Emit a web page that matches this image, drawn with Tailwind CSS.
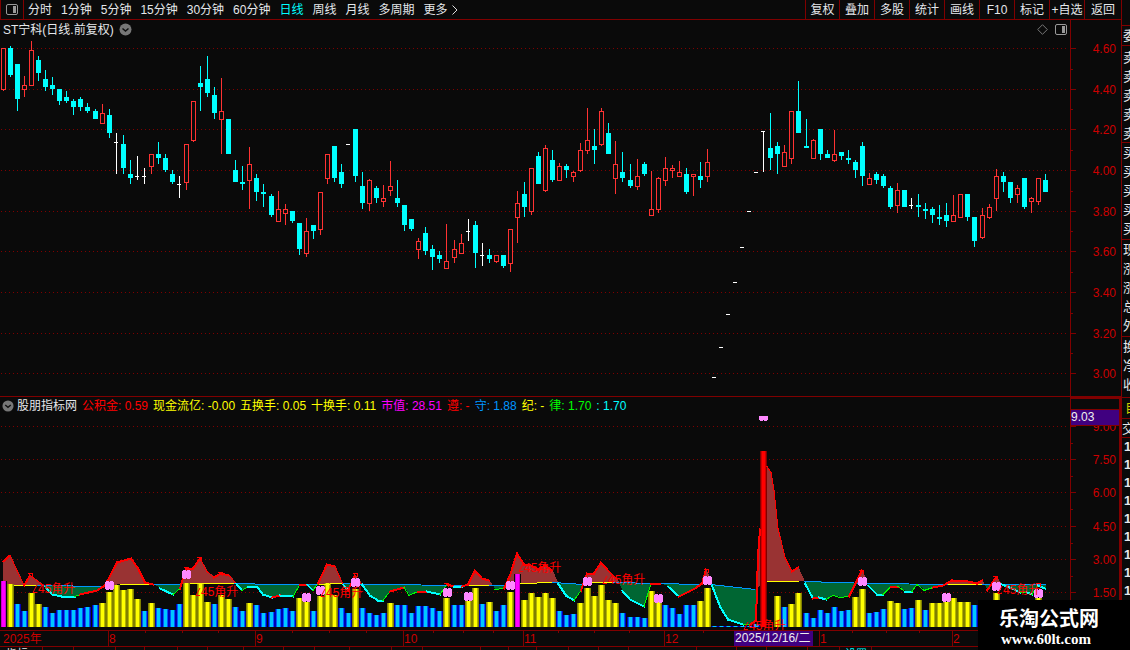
<!DOCTYPE html>
<html lang="zh-CN">
<head>
    <meta charset="UTF-8">
    <meta name="viewport" content="width=device-width, initial-scale=1.0">
    <title>ST宁科 日线</title>
    <script src="https://cdn.jsdelivr.net/npm/@tailwindcss/browser@4"></script>
</head>
<body class="h-screen overflow-hidden bg-[#0a0a0a] text-[12px] leading-[18px] text-gray-200 font-['Liberation_Sans','Noto_Sans_CJK_SC',sans-serif] whitespace-nowrap">
<div class="flex h-full">

    <main class="flex-1 min-w-0 flex flex-col">
        <!-- Toolbar -->
        <nav class="h-5 shrink-0 flex justify-between border-b border-l border-[#800000]">
            <div class="flex">
                <button type="button" aria-label="侧栏" class="w-[23px] flex items-center justify-center border-r border-[#800000]">
                    <svg width="12" height="11" viewBox="0 0 12 11" fill="none"><rect x=".5" y=".5" width="11" height="10" rx="1.5" stroke="#999"/><rect x="7" y="2" width="3" height="7" fill="#999"/></svg>
                </button>
                <div class="flex gap-[9px] pl-1">
                    <button type="button">分时</button>
                    <button type="button">1分钟</button>
                    <button type="button">5分钟</button>
                    <button type="button">15分钟</button>
                    <button type="button">30分钟</button>
                    <button type="button">60分钟</button>
                    <button type="button" class="text-[#00ffff]">日线</button>
                    <button type="button">周线</button>
                    <button type="button">月线</button>
                    <button type="button">多周期</button>
                    <button type="button" class="flex items-center gap-1">更多
                        <svg width="6" height="10" viewBox="0 0 6 10" fill="none" stroke="#ddd"><path d="M.5 .5L5 5L.5 9.5"/></svg>
                    </button>
                </div>
            </div>
            <div class="flex">
                <button type="button" class="w-[34px] border-l border-[#800000]">复权</button>
                <button type="button" class="w-[35px] border-l border-[#800000]">叠加</button>
                <button type="button" class="w-[35px] border-l border-[#800000]">多股</button>
                <button type="button" class="w-[35px] border-l border-[#800000]">统计</button>
                <button type="button" class="w-[35px] border-l border-[#800000]">画线</button>
                <button type="button" class="w-[35px] border-l border-[#800000]">F10</button>
                <button type="button" class="w-[35px] border-l border-[#800000]">标记</button>
                <button type="button" class="w-[35px] border-l border-[#800000]">+自选</button>
                <button type="button" class="w-[37px] border-l border-[#800000]">返回</button>
            </div>
        </nav>

        <!-- Candlesticks -->
        <section class="shrink-0 flex">
            <div class="flex-1 min-w-0">
                <div class="h-[19px] flex items-center justify-between pl-[3px] pr-[3px]">
                    <h1 class="flex items-center gap-[5px]">ST宁科(日线.前复权)
                        <svg width="13" height="13" viewBox="0 0 13 13" fill="none"><circle cx="6.5" cy="6.5" r="6" fill="#777"/><path d="M3.5 5.5L6.5 8L9.5 5.5" stroke="#111" stroke-width="1.5"/></svg>
                    </h1>
                    <div class="flex items-center gap-[7px]">
                        <svg width="11" height="11" viewBox="0 0 11 11" fill="none" stroke="#777"><path d="M5.5 .7L10.3 5.5L5.5 10.3L.7 5.5Z"/></svg>
                        <svg width="12" height="11" viewBox="0 0 12 11" fill="none"><rect x=".5" y=".5" width="11" height="10" rx="1.5" stroke="#999"/><rect x="7" y="2" width="3" height="7" fill="#999"/></svg>
                    </div>
                </div>
                <svg class="block w-full h-[357px]" shape-rendering="crispEdges"><g id="candles" transform="translate(0,-39)"></g></svg>
            </div>
            <svg class="block w-[51px] h-[376px] border-l border-[#800000]"><g id="priceAxis" transform="translate(0,-20)"></g></svg>
        </section>

        <!-- Indicator -->
        <section class="shrink-0 flex border-t border-[#800000]">
            <div class="flex-1 min-w-0">
                <div class="h-[18px] flex items-center gap-[5px] pl-[2px]">
                    <svg width="12" height="12" viewBox="0 0 13 13" fill="none"><circle cx="6.5" cy="6.5" r="6" fill="#777"/><path d="M3.5 5.5L6.5 8L9.5 5.5" stroke="#111" stroke-width="1.5"/></svg>
                    <span class="-ml-[2px]">股朋指标网</span>
                    <span class="text-[#ff0000]">公积金: 0.59</span>
                    <span class="text-[#ffff00]">现金流亿: -0.00</span>
                    <span class="text-[#ffff00]">五换手: 0.05</span>
                    <span class="text-[#ffff00]">十换手: 0.11</span>
                    <span class="text-[#ff00ff]">市值: 28.51</span>
                    <span class="text-[#ff0000]">遵: -</span>
                    <span class="text-[#0096ff]">守: 1.88</span>
                    <span class="text-[#ffff00]">纪: -</span>
                    <span class="text-[#00ff00]">律: 1.70</span>
                    <span class="text-[#00ffff]">: 1.70</span>
                </div>
                <svg class="block w-full h-[215px] overflow-visible"><g id="indicator" transform="translate(0,-415)"></g></svg>
            </div>
            <svg class="block w-[51px] h-[233px] border-l border-t-2 border-r-2 border-[#800000]"><g id="valueAxis" transform="translate(0,-399)"></g></svg>
        </section>

        <!-- Dates -->
        <svg class="block shrink-0 w-full h-4 border-t border-[#800000]"><g id="dates"></g></svg>

        <!-- Lower tabs, only their top edge is in view -->
        <div class="h-1 shrink-0 overflow-hidden flex border-t border-[#800000] text-[11px] leading-[14px]">
            <span class="w-[43px] pl-[6px] border-r border-[#800000]">指标</span>
            <span class="w-[31px] border-r border-[#800000]"></span>
            <span class="w-[42px] border-r border-[#800000]"></span>
            <span class="w-[29px] border-r border-[#800000]"></span>
            <span class="w-[33px] border-r border-[#800000]"></span>
            <span class="w-[30px] border-r border-[#800000]"></span>
            <span class="w-[36px] border-r border-[#800000]"></span>
            <span class="w-[40px] border-r border-[#800000]"></span>
            <span class="w-[31px] border-r border-[#800000]"></span>
            <span class="w-[35px] border-r border-[#800000]"></span>
            <span class="w-[42px] border-r border-[#800000]"></span>
            <span class="w-[31px] border-r border-[#800000]"></span>
            <span class="w-[58px] border-r border-[#800000]"></span>
            <span class="w-[28px] border-r border-[#800000]"></span>
            <span class="w-[28px] border-r border-[#800000]"></span>
            <span class="w-[32px] border-r border-[#800000]"></span>
            <span class="w-[30px] border-r border-[#800000]"></span>
            <span class="w-[30px] border-r border-[#800000]"></span>
            <span class="w-[68px] border-r border-[#800000]"></span>
            <span class="w-[40px] border-r border-[#800000]"></span>
            <span class="w-[30px] border-r border-[#800000]"></span>
            <span class="w-[41px] border-r border-[#800000]"></span>
            <span class="w-[32px] border-r border-[#800000]"></span>
            <span class="w-[32px] pl-[5px] border-r border-[#800000] text-[#00ffff]">设置</span>
        </div>
    </main>

    <!-- Quote panel, pushed off the right edge of the window -->
    <aside class="w-[9px] shrink-0 overflow-hidden border-l border-[#800000] pt-[25px] text-[13px] leading-[19px]">
        <p class="pl-[1px] border-y border-[#800000]">委比</p>
        <div class="pl-[1px] pt-[2px] h-[97px] border-b border-[#800000]"><p>卖五</p><p>卖四</p><p>卖三</p><p>卖二</p><p>卖一</p></div>
        <div class="pl-[1px] h-[97px] border-b border-[#800000]"><p>买一</p><p>买二</p><p>买三</p><p>买四</p><p>买五</p></div>
        <div class="pl-[1px] h-[97px] border-b border-[#800000]"><p>现价</p><p>涨跌</p><p>涨幅</p><p>总量</p><p>外盘</p></div>
        <div class="pl-[1px] h-[61px] border-b border-[#800000]"><p>换手</p><p>净资</p><p>收益</p></div>
        <p class="pl-[3px] h-[21px] border-b border-[#800000] text-[#cccc00]">自选</p>
        <p class="h-[19px] border-b border-[#800000]">交易</p>
        <div class="pl-[2px] font-bold leading-[18px]"><p>1</p><p>1</p><p>1</p><p>1</p><p>1</p><p>1</p><p>1</p><p>1</p><p>1</p></div>
    </aside>
</div>

<!-- Site badge -->
<div class="absolute right-0 bottom-0 w-[152px] h-[50px] bg-black text-white font-bold pl-[21px] pt-[8px]">
    <p class="text-[20px] leading-[22px]">乐淘公式网</p>
    <p class="pl-[2px] text-[15px] leading-[18px] font-['Liberation_Serif',serif]">www.60lt.com</p>
</div>

<script>
    const NS = 'http://www.w3.org/2000/svg';

    function add(parent, tag, attrs, text) {
        const el = document.createElementNS(NS, tag);
        for (const k in attrs) el.setAttribute(k, attrs[k]);
        if (text) el.textContent = text;
        parent.appendChild(el);
        return el;
    }

    function box(parent, x, y, w, h, fill) {
        add(parent, 'rect', { x, y, width: w, height: h, fill });
    }

    // Pixel column of bar i
    function col(i) {
        return 3 + 7 * i + Math.floor((i + 12.3) / 25.1);
    }

    // r: up, c: down, w: unchanged. Up and down: high, body top, body bottom, low. Unchanged: high, tick, low
    const bars = `r48,48,90,91 c46,48,75,77 c64,64,99,111 r76,85,90,97 r41,50,86,86 c56,60,73,81 c70,79,87,91 c77,85,89,95 c89,89,101,105 c91,97,101,103
        c99,101,107,115 c97,99,107,111 c103,107,111,113 c109,111,119,119 r104,113,124,124 c109,115,133,138 w133,142,174 c135,144,168,174 c160,174,178,184 w156,176,180
        w168,176,184 r154,154,167,174 c142,154,158,164 c154,158,170,172 c170,174,182,184 w176,184,198 r144,144,183,190 r101,101,141,142 c66,83,87,111 c56,79,93,97
        c87,95,113,119 r78,111,120,154 c119,119,154,154 c160,170,182,182 c166,182,184,190 r147,164,181,209 c174,178,192,201 c184,192,194,207 c194,196,215,217 r191,209,222,222
        r204,209,214,225 c211,211,221,223 c223,223,249,255 r218,231,254,257 c225,225,231,239 r192,192,230,235 r154,154,179,184 c146,146,178,182 c164,172,184,188 w144,144,145
        c129,129,176,182 c172,186,203,209 r179,180,204,211 c186,188,198,203 r185,198,202,207 r161,186,191,196 c180,198,203,207 c205,205,225,231 c219,219,229,231 r238,241,250,259
        c227,233,251,255 c245,249,257,270 c251,255,259,263 r224,261,269,269 r240,249,258,263 r234,243,254,254 w219,231,241 c221,225,253,268 w243,255,266 c249,255,259,263
        r255,255,262,263 c255,255,266,268 r229,229,264,272 r191,203,218,243 c182,194,207,217 r168,168,212,215 c152,156,184,184 r145,148,191,192 c150,160,180,182 r163,166,181,181
        c164,166,170,178 r171,172,177,182 r143,150,171,172 r108,140,151,154 c129,146,150,164 r108,111,145,146 c123,133,154,154 r141,164,179,194 c152,172,178,182 c164,180,186,188
        r159,176,187,190 c162,164,174,176 r171,209,216,216 r177,178,210,213 r157,168,181,186 r165,168,171,178 r161,172,177,177 c168,174,192,194 r174,174,177,196 c162,176,180,188
        r149,162,177,182 w377,377,378 w347,347,348 w314,314,315 w282,282,283 w247,247,248 w211,211,212 w172,172,173 w131,131,172 c113,148,158,170
        c142,146,154,174 r145,152,167,167 r111,111,159,164 c81,111,133,133 c119,146,148,148 r139,140,159,159 c129,129,154,160 c150,154,158,158 r130,154,161,162 c152,152,156,160
        c150,158,160,164 c160,162,170,178 c142,146,176,186 r173,178,185,185 c172,174,180,184 c174,176,186,188 c186,188,207,209 r183,190,206,213 c190,190,207,207 w198,205,209
        c194,205,207,217 c203,209,211,219 c207,209,215,223 c205,217,219,225 c203,215,221,227 r195,215,222,222 r194,194,218,218 c194,194,217,221 c217,217,241,247 r208,215,238,239
        r204,207,218,219 r169,176,199,211 c172,176,182,192 c182,182,198,203 r185,188,195,203 c178,178,207,209 r197,198,202,213 r178,178,202,205 c174,180,192,192`.split(/\s+/);

    const candles = document.getElementById('candles');

    function gridLine(parent, y) {
        add(parent, 'line', { x1: 1, x2: '99.6%', y1: y + 0.5, y2: y + 0.5, stroke: '#800000', 'stroke-dasharray': '1 3', 'shape-rendering': 'crispEdges' });
    }

    const prices = [['4.60', 48], ['4.40', 89], ['4.20', 129], ['4.00', 170], ['3.80', 211], ['3.60', 251], ['3.40', 292], ['3.20', 333], ['3.00', 373]];
    prices.forEach(p => gridLine(candles, p[1]));

    bars.forEach((s, i) => {
        const v = s.slice(1).split(',').map(Number);
        const x = col(i);
        if (s[0] === 'w') {
            box(candles, x, v[0], 1, v[2] - v[0], '#fff');
            box(candles, x - 2, v[1], 4, 1, '#fff');
            return;
        }
        const color = s[0] === 'r' ? '#ff3232' : '#00ffff';
        box(candles, x, v[0], 1, v[1] - v[0], color);
        box(candles, x, v[2], 1, v[3] - v[2], color);
        if (s[0] === 'r') {
            add(candles, 'rect', { x: x - 1.5, y: v[1] + 0.5, width: 4, height: v[2] - v[1] - 1, fill: '#0a0a0a', stroke: color });
        } else {
            box(candles, x - 2, v[1], 5, v[2] - v[1], color);
        }
    });

    // Vertical axes
    function axis(parent, labels) {
        labels.forEach(([text, y], i) => {
            box(parent, 0, y, 5, 1, '#800000');
            const next = labels[i + 1];
            if (next) box(parent, 0, Math.round((y + next[1]) / 2), 2, 1, '#800000');
            add(parent, 'text', { x: 45, y: y + 5, fill: '#cc0000', 'text-anchor': 'end' }, text);
        });
    }
    axis(document.getElementById('priceAxis'), prices);

    const values = [['9.00', 426], ['7.50', 459], ['6.00', 492], ['4.50', 526], ['3.00', 559], ['1.50', 592]];
    const valueAxis = document.getElementById('valueAxis');
    axis(valueAxis, values);
    add(valueAxis, 'rect', { x: -1, y: 409.5, width: 51, height: 16, fill: '#400080', stroke: '#800000' });
    add(valueAxis, 'text', { x: 0, y: 421, fill: '#eee' }, '9.03');

    // Indicator
    const ind = document.getElementById('indicator');
    values.forEach(v => gridLine(ind, v[1]));

    // Mean line: x, y, colour of the piece that ends there (- is a gap)
    const base = [[3, 585, '-'], [14, 585, '-'], [38, 585, 'y'], [107, 586, 'b'], [120, 584, '-'], [151, 584, 'y'], [180, 584, 'b'], [190, 583, '-'], [235, 583, 'y'],
        [275, 584, 'b'], [318, 584, 'b'], [343, 583, 'y'], [375, 584, 'b'], [467, 585, 'b'], [489, 585, 'y'], [504, 585, 'b'], [521, 583, '-'], [553, 582, 'y'],
        [583, 584, 'b'], [590, 582, '-'], [614, 582, 'y'], [700, 584, 'b'], [711, 584, '-'], [755, 589, 'b'], [767, 581, '-'], [798, 581, 'y'], [805, 581, '-'],
        [870, 583, 'b'], [948, 584, 'b'], [982, 584, 'y'], [1045, 584, 'b']];

    // Signal line: R thick red, r thin red, c cyan, g green, - none
    const signal = [[3, 561, 'R'], [10, 555, 'R'], [24, 585, 'r'], [30, 575, 'R'], [45, 586, 'r'], [52, 594, 'c'], [62, 596, 'c'], [75, 596, 'c'], [80, 594, 'g'], [97, 590, 'R'],
        [105, 585, 'R'], [117, 562, 'R'], [131, 558, 'R'], [138, 568, 'R'], [145, 582, 'R'], [153, 584, 'R'], [160, 588, '-'], [173, 594, 'c'], [180, 588, 'g'], [186, 568, 'R'],
        [193, 568, 'R'], [200, 558, 'R'], [207, 571, 'r'], [214, 577, 'r'], [221, 573, 'R'], [229, 575, 'R'], [236, 583, 'r'], [242, 590, 'c'], [248, 586, 'g'], [257, 586, 'c'],
        [263, 594, 'c'], [272, 597, 'c'], [280, 595, 'R'], [293, 596, 'c'], [300, 584, 'g'], [307, 584, 'R'], [313, 590, 'c'], [318, 583, 'g'], [327, 564, 'R'], [335, 566, 'R'],
        [343, 584, 'r'], [348, 590, 'c'], [355, 575, 'R'], [362, 584, 'r'], [370, 595, 'c'], [378, 600, 'c'], [383, 600, 'c'], [390, 591, 'g'], [404, 587, 'R'], [409, 595, 'g'],
        [418, 591, 'g'], [427, 591, 'R'], [440, 594, 'c'], [447, 584, 'g'], [454, 586, 'R'], [462, 586, 'c'], [468, 584, 'R'], [475, 570, 'R'], [482, 578, 'R'], [489, 580, 'R'],
        [495, 589, '-'], [504, 588, 'g'], [510, 575, 'R'], [517, 553, 'R'], [524, 564, 'R'], [531, 565, 'R'], [538, 569, 'R'], [545, 565, 'R'], [552, 570, 'R'], [558, 583, '-'],
        [566, 595, 'c'], [574, 600, 'c'], [581, 590, 'g'], [587, 573, 'R'], [594, 573, 'R'], [601, 562, 'R'], [608, 570, 'R'], [617, 579, 'R'], [622, 590, '-'], [630, 599, 'c'],
        [644, 606, 'c'], [651, 583, 'g'], [660, 583, 'R'], [668, 586, '-'], [679, 596, 'c'], [695, 588, 'R'], [702, 583, 'R'], [706, 569, 'R'], [712, 585, '-'], [720, 606, 'c'],
        [728, 619, 'c'], [743, 624, 'c'], [750, 624, 'g'], [756, 620, 'R'], [758, 555, 'R'], [760, 529, 'R'], [762, 460, '-'], [767, 466, '-'], [771, 472, 'r'], [774, 490, 'r'],
        [778, 528, 'r'], [785, 557, 'r'], [792, 571, 'r'], [798, 567, 'R'], [805, 583, '-'], [813, 598, 'c'], [819, 597, 'R'], [826, 599, 'c'], [833, 595, 'g'], [840, 597, 'g'],
        [849, 596, 'g'], [856, 582, 'R'], [862, 570, 'R'], [868, 585, '-'], [877, 594, 'c'], [883, 594, 'c'], [891, 586, 'g'], [898, 586, 'R'], [905, 591, 'g'], [912, 591, 'c'],
        [917, 584, 'g'], [924, 590, 'g'], [933, 587, 'g'], [943, 585, 'R'], [952, 580, 'R'], [968, 581, 'R'], [977, 583, 'R'], [982, 580, 'R'], [987, 590, '-'], [996, 577, 'R'],
        [1002, 584, '-'], [1012, 588, 'c'], [1020, 592, 'c'], [1027, 592, 'g'], [1032, 594, 'c'], [1038, 585, 'g'], [1045, 588, 'c']];

    function yAt(points, x) {
        for (let i = 1; i < points.length; i++) {
            const [x0, y0] = points[i - 1], [x1, y1] = points[i];
            if (x <= x1) return y0 + (y1 - y0) * (x - x0) / (x1 - x0);
        }
        return points[points.length - 1][1];
    }

    // Area between signal and mean, one pixel column at a time
    let above = '', below = '';
    for (let x = 3; x <= 1045; x++) {
        const a = Math.round(yAt(signal, x)), b = Math.round(yAt(base, x));
        const d = `M${x + 0.5} ${a}V${b}`;
        if (a < b) above += d; else if (a > b) below += d;
    }
    add(ind, 'path', { d: above, stroke: '#993333', 'shape-rendering': 'crispEdges' });
    add(ind, 'path', { d: below, stroke: '#006633', 'shape-rendering': 'crispEdges' });

    // Turnover bars: colour and top
    const turnover = `m581 y584 b604 b611 y593 y604 b607 b613 b610 b610 b610 b608 b607 b605 y603 y592 y585 y590 y589 y599 b611 y603 b608 b609 b610 b604 y583 y595 y584 y602
        b604 y595 y599 b607 b611 y603 b605 b613 b612 b609 b608 b611 y598 y602 b611 y596 y583 y595 b608 b613 y589 b608 b613 b615 b613 y603 b605 b605 b613 b606
        b606 b608 b611 y598 b605 b605 y601 y588 b604 y602 b611 b605 y592 m574 y600 y593 y597 y593 y598 b611 b615 b614 y603 y588 y596 y585 y600 y603 b613 b617
        b617 b618 y591 y602 b605 b608 b614 b605 b605 y601 y588 b626 b626 b626 b626 b626 b626 b624 r451 - y596 b607 y604 y593 b613 b618 b610 b613 b607 b611
        b610 y597 y589 b613 b612 b609 y601 y603 b609 b608 y600 b610 y603 y603 y602 y598 y602 y602 b605 b605 b606 y593 b604 b610 b608 b612 b606 y598 b604`.split(/\s+/);
    const shades = {
        y: ['#808000', '#b3b300', '#ffff00'],
        b: ['#0000b3', '#0055ff', '#00c8ff'],
        m: ['#0a0a0a', '#cc00cc', '#ff00ff'],
        r: ['#800000', '#cc0000', '#ff0000']
    };
    turnover.forEach((s, i) => {
        if (s === '-') return;
        const x = col(i), y = +s.slice(1), c = shades[s[0]];
        box(ind, x - 3, y, 7, 627 - y, c[0]);
        box(ind, x - 2, y, 5, 627 - y, c[1]);
        box(ind, x - 1, y, 3, 627 - y, c[2]);
    });

    function drawLine(points, colors, width) {
        for (let i = 1; i < points.length; i++) {
            const [x0, y0] = points[i - 1], [x1, y1, k] = points[i];
            if (k === '-') continue;
            add(ind, 'line', { x1: x0, y1: y0 + 0.5, x2: x1, y2: y1 + 0.5, stroke: colors[k], 'stroke-width': width[k] || 1, 'stroke-linecap': 'square', 'shape-rendering': 'crispEdges' });
        }
    }
    drawLine(base, { y: '#ffff00', b: '#0096ff' }, {});
    drawLine(signal, { R: '#ff0000', r: '#ff0000', c: '#00ffff', g: '#00ff00' }, { R: 2, c: 2 });

    // Peak hooks
    [[30, 573], [186, 567], [199, 557], [220, 572], [355, 573], [446, 583], [706, 569], [861, 570], [995, 576], [1038, 583]].forEach(([x, y]) => {
        add(ind, 'path', { d: `M${x - 2} ${y + 0.5}h4v3`, fill: 'none', stroke: '#ff0000', 'shape-rendering': 'crispEdges' });
    });

    // Pink markers
    [[109, 585], [186, 574], [306, 597], [320, 590], [355, 582], [447, 592], [468, 596], [510, 585], [587, 581], [658, 598], [707, 580], [862, 581], [946, 597], [996, 586], [1038, 593]].forEach(([x, y]) => {
        box(ind, x - 4, y - 3, 9, 7, '#ff88ff');
        box(ind, x - 3, y - 4, 3, 9, '#ff88ff');
        box(ind, x + 1, y - 4, 3, 9, '#ff88ff');
    });
    box(ind, 759, 416, 9, 4, '#ff88ff');
    box(ind, 760, 420, 3, 1, '#ff88ff');
    box(ind, 764, 420, 3, 1, '#ff88ff');

    // Angle labels
    [[32, 589], [195, 592], [320, 593], [518, 568], [602, 580], [743, 626], [997, 590]].forEach(([x, y]) => {
        add(ind, 'path', { d: `M${x + 5} ${y - 4}L${x + 1} ${y + 3.5}h4`, fill: 'none', stroke: '#ff0000' });
        add(ind, 'text', { x: x + 6, y: y + 4, fill: '#ff0000' }, '45角升');
    });

    // Date axis
    const dates = document.getElementById('dates');
    add(dates, 'text', { x: 3, y: 12, fill: '#cc0000' }, '2025年');
    [['8', 108], ['9', 255], ['10', 403], ['11', 523], ['12', 664], ['1', 819], ['2', 952]].forEach(([text, x]) => {
        box(dates, x, 0, 1, 15, '#800000');
        add(dates, 'text', { x: x + 1, y: 12, fill: '#cc0000' }, text);
    });
    [145, 182, 218, 292, 329, 366, 433, 463, 493, 558, 594, 629, 703, 852, 886, 919].forEach(x => box(dates, x, 0, 1, 2, '#800000'));
    box(dates, 734, 0, 79, 15, '#400080');
    add(dates, 'text', { x: 735, y: 11, fill: '#eee' }, '2025/12/16/二');
</script>
</body>
</html>
